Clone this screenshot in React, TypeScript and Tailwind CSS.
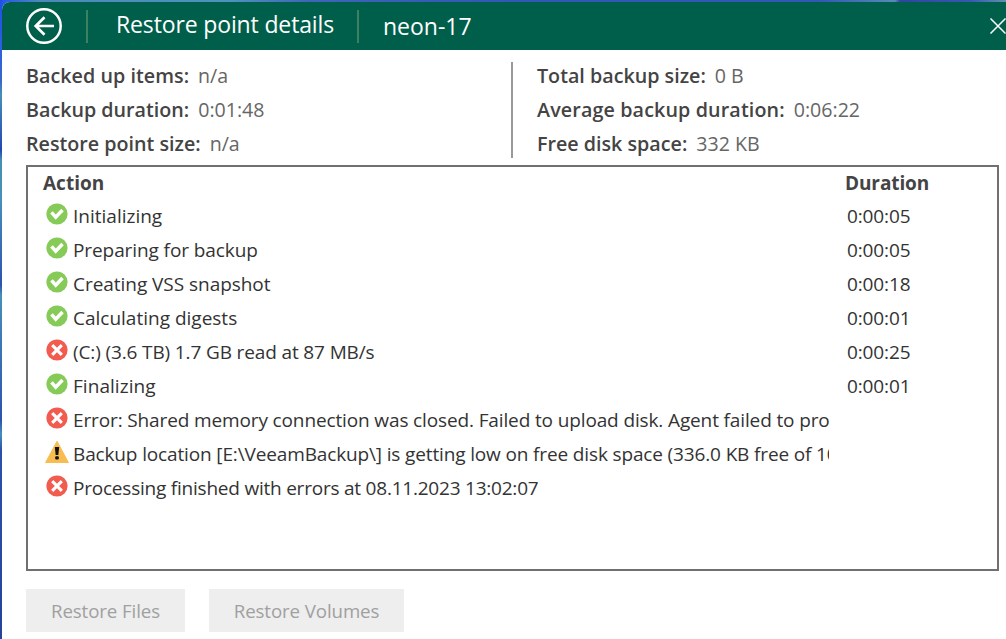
import React from "react";

type Status = "ok" | "error" | "warning";

const actions: { status: Status; text: string; duration?: string; tracking: string }[] = [
  { status: "ok", text: "Initializing", duration: "0:00:05", tracking: "tracking-[0px]" },
  { status: "ok", text: "Preparing for backup", duration: "0:00:05", tracking: "tracking-[-0.09px]" },
  { status: "ok", text: "Creating VSS snapshot", duration: "0:00:18", tracking: "tracking-[-0.04px]" },
  { status: "ok", text: "Calculating digests", duration: "0:00:01", tracking: "tracking-[0px]" },
  { status: "error", text: "(C:) (3.6 TB) 1.7 GB read at 87 MB/s", duration: "0:00:25", tracking: "tracking-[-0.13px]" },
  { status: "ok", text: "Finalizing", duration: "0:00:01", tracking: "tracking-[0.05px]" },
  {
    status: "error",
    text: "Error: Shared memory connection was closed. Failed to upload disk. Agent failed to pro",
    tracking: "tracking-[-0.13px]",
  },
  {
    status: "warning",
    text: "Backup location [E:\\VeeamBackup\\] is getting low on free disk space (336.0 KB free of 10",
    tracking: "tracking-[-0.14px]",
  },
  { status: "error", text: "Processing finished with errors at 08.11.2023 13:02:07", tracking: "tracking-[-0.22px]" },
];

function StatusIcon({ status }: { status: Status }) {
  if (status === "warning") {
    return (
      <svg width="24" height="24" viewBox="0 0 24 24" className="shrink-0">
        <path d="M12 1.2 23.4 22.5H.6Z" fill="#f8bd50" stroke="#f8bd50" strokeWidth="1" strokeLinejoin="round" />
        <path d="M9.8 7h4.4l-.9 8h-2.6Z" fill="#111" />
        <rect x="10.2" y="16.2" width="3.6" height="3.2" rx="1" fill="#111" />
      </svg>
    );
  }
  return (
    <svg width="24" height="24" viewBox="0 0 24 24" className="shrink-0">
      <circle cx="12" cy="12" r="10.6" fill={status === "ok" ? "#86ca58" : "#f15c4f"} />
      {status === "ok" ? (
        <path d="m6.5 10.4 4.2 4.8 6.8-7.2" fill="none" stroke="#fff" strokeWidth="3.5" />
      ) : (
        <path d="m7.2 7.2 9.6 9.6m0-9.6-9.6 9.6" fill="none" stroke="#fff" strokeWidth="3.1" />
      )}
    </svg>
  );
}

function Detail({ label, value, tracking = "" }: { label: string; value: string; tracking?: string }) {
  return (
    <div className="flex h-[34px] items-center gap-[9px] whitespace-nowrap">
      <span className={`text-[19.7px] font-semibold text-[#444] ${tracking}`}>{label}</span>
      <span className="text-[19.6px] text-[#666]">{value}</span>
    </div>
  );
}

function App() {
  return (
    <div className="h-[639px] w-[1006px] overflow-hidden bg-[linear-gradient(90deg,#2454e8_0px,#4c88bb_40px,#4f92bd_230px,#3e65b6_310px,#3158b5_500px,#3158b5_820px,#568bb5_895px,#3045a0_900px,#3558b0_970px,#6090b0_1006px)] font-['Open_Sans',sans-serif] text-[19px] leading-[26px]">
      <div className="h-full bg-[linear-gradient(180deg,#1f4fe5_0px,#2e5fe0_50px,#3767c8_80px,#478fb9_95px,#2545b5_150px,#448fb5_160px,#478fb9_200px,#2c52b0_285px,#478fb9_295px,#2c52b0_420px,#478fb9_434px,#2c4fae_450px,#26439a_639px)] bg-[length:2px_100%] bg-no-repeat pt-[2px] pl-[2px]">
        <div className="flex h-full flex-col overflow-hidden rounded-tl-[8px] bg-white">
          <header className="flex h-12 shrink-0 items-center bg-[#005f4b] text-white">
            <svg width="38" height="38" viewBox="0 0 38 38" className="ml-[23px] shrink-0" fill="none" stroke="#fff">
              <circle cx="19" cy="19" r="16.7" strokeWidth="2.5" />
              <path d="M29 19H10.8M19.5 10.3 10.7 19l8.8 8.7" strokeWidth="2.7" />
            </svg>
            <div className="ml-[23px] h-[33px] w-[2px] bg-[#3d8062]" />
            <h1 className="mb-[4px] ml-[28px] w-[218px] text-[23px] tracking-[-0.14px] whitespace-nowrap">
              Restore point details
            </h1>
            <div className="ml-[23px] h-[33px] w-[2px] bg-[#3d8062]" />
            <span className="ml-[24px] text-[23px] whitespace-nowrap">neon-17</span>
            <svg width="20" height="20" viewBox="0 0 20 20" className="mr-[-2px] ml-auto" fill="none" stroke="#fff">
              <path d="m2.5 2.5 15 15M17.5 2.5l-15 15" strokeWidth="1.5" />
            </svg>
          </header>

          <section className="flex h-[115px] shrink-0 pt-[9px] pl-6">
            <div className="w-[485px]">
              <Detail label="Backed up items:" value="n/a" tracking="tracking-[0.04px]" />
              <Detail label="Backup duration:" value="0:01:48" />
              <Detail label="Restore point size:" value="n/a" />
            </div>
            <div className="mt-[3px] h-[96px] w-[2px] bg-[#999]" />
            <div className="ml-6">
              <Detail label="Total backup size:" value="0 B" />
              <Detail label="Average backup duration:" value="0:06:22" tracking="tracking-[0.13px]" />
              <Detail label="Free disk space:" value="332 KB" />
            </div>
          </section>

          <main className="ml-6 h-[406px] w-[973px] shrink-0 border-2 border-[#707070] text-[#333]">
            <div className="flex h-8 items-center pl-[15px] font-bold text-[#444]">
              <span className="w-[802px]">Action</span>
              <span className="tracking-[-0.1px]">Duration</span>
            </div>
            {actions.map((a) => (
              <div key={a.text} className="flex h-[34px] items-center pl-[17px]">
                <div className="mb-[5px]">
                  <StatusIcon status={a.status} />
                </div>
                <div className={`ml-[4px] w-[756px] overflow-hidden whitespace-nowrap ${a.tracking}`}>{a.text}</div>
                <span className="ml-[18px] tracking-[-0.13px]">{a.duration}</span>
              </div>
            ))}
          </main>

          <footer className="mt-[18px] ml-6 flex gap-6 text-[18.7px] tracking-[-0.1px] text-[#a0a0a0]">
            <button className="h-[43px] w-[159px] bg-[#eee] whitespace-nowrap">Restore Files</button>
            <button className="h-[43px] w-[195px] bg-[#eee] whitespace-nowrap">Restore Volumes</button>
          </footer>
        </div>
      </div>
    </div>
  );
}

export default App;
